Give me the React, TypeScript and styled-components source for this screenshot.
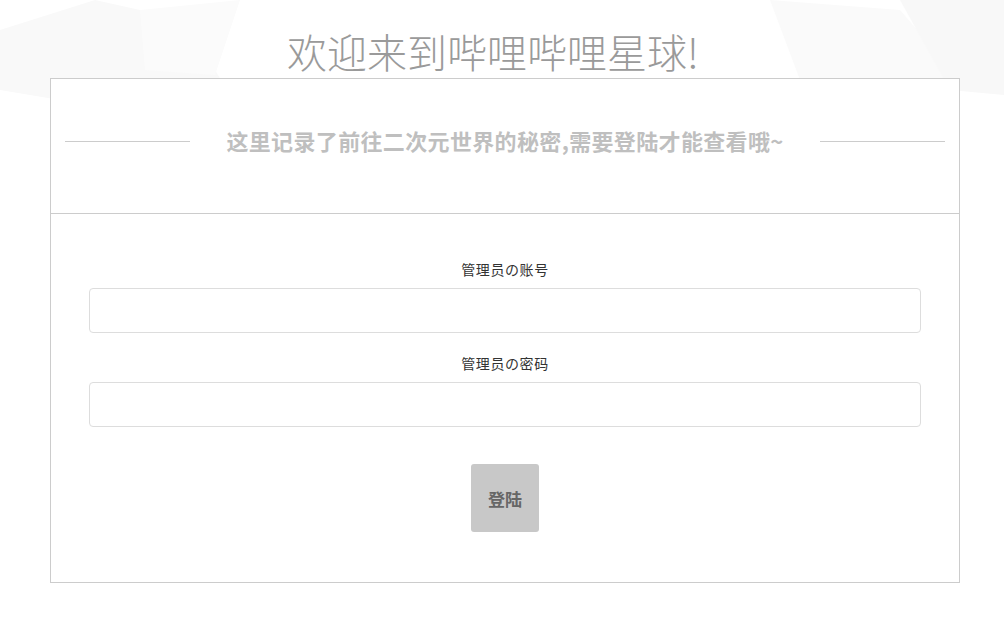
import React from "react";
import styled, { createGlobalStyle } from "styled-components";

const GlobalStyle = createGlobalStyle`
  html, body {
    margin: 0;
    padding: 0;
    background: #ffffff;
  }
  body {
    font-family: "Noto Sans CJK SC", "Noto Sans", "Liberation Sans", sans-serif;
    color: #333;
  }
  * {
    box-sizing: border-box;
  }
`;

const FIELDS = [
  { label: "管理员の账号", type: "text" },
  { label: "管理员の密码", type: "password" },
];

export default function App() {
  const [values, setValues] = React.useState<string[]>(["", ""]);

  return (
    <Page>
      <GlobalStyle />
      <Backdrop viewBox="0 0 1004 120" preserveAspectRatio="none" aria-hidden>
        <polygon points="0,30 95,0 185,20 230,95 150,110 60,100 0,90" fill="#f9f9f9" />
        <polygon points="140,10 240,0 215,75 145,70" fill="#fbfbfb" />
        <polygon points="770,0 900,10 960,80 870,95 800,80" fill="#fafafa" />
        <polygon points="900,0 1004,0 1004,95 950,90" fill="#f8f8f8" />
      </Backdrop>
      <Title>欢迎来到哔哩哔哩星球!</Title>
      <Panel>
        <PanelHead>
          <Rule />
          <Tagline>这里记录了前往二次元世界的秘密,需要登陆才能查看哦~</Tagline>
          <Rule />
        </PanelHead>
        <Form
          onSubmit={(e) => {
            e.preventDefault();
          }}
        >
          {FIELDS.map((field, idx) => (
            <Field key={field.label}>
              <Label>{field.label}</Label>
              <Input
                type={field.type}
                value={values[idx]}
                onChange={(e) => {
                  const next = [...values];
                  next[idx] = e.target.value;
                  setValues(next);
                }}
              />
            </Field>
          ))}
          <LoginButton type="submit">登陆</LoginButton>
        </Form>
      </Panel>
    </Page>
  );
}

const Page = styled.div`
  position: relative;
  width: 1004px;
  min-height: 623px;
  padding-top: 24px;
  overflow: hidden;
`;

const Backdrop = styled.svg`
  position: absolute;
  top: 0;
  left: 0;
  width: 1004px;
  height: 120px;
  z-index: 0;
`;

const Title = styled.h1`
  position: relative;
  z-index: 1;
  margin: 0 0 0 287px;
  height: 54px;
  font-size: 40px;
  line-height: 54px;
  font-weight: 300;
  color: #9a9a9a;
  letter-spacing: 0;
  white-space: nowrap;
`;

const Panel = styled.div`
  position: relative;
  z-index: 1;
  width: 910px;
  margin-left: 50px;
  background: #ffffff;
  border: 1px solid #cccccc;
`;

const PanelHead = styled.div`
  display: flex;
  align-items: center;
  height: 135px;
  padding: 0 14px 10px 14px;
  border-bottom: 1px solid #cccccc;
`;

const Rule = styled.div`
  flex: 1;
  height: 1px;
  background: #cccccc;
`;

const Tagline = styled.h2`
  margin: -2px 36px 0 36px;
  font-size: 22px;
  line-height: 30px;
  font-weight: 700;
  color: #bfbfbf;
  letter-spacing: 0.35px;
  white-space: nowrap;
`;

const Form = styled.form`
  display: flex;
  flex-direction: column;
  align-items: center;
  padding: 45px 38px 50px 38px;
`;

const Field = styled.div`
  display: flex;
  flex-direction: column;
  align-items: center;
  width: 100%;
  margin-bottom: 20px;
`;

const Label = styled.label`
  font-size: 14px;
  line-height: 20px;
  color: #333333;
  letter-spacing: 0.6px;
  margin-bottom: 9px;
`;

const Input = styled.input`
  width: 100%;
  height: 45px;
  border: 1px solid #dddddd;
  border-radius: 4px;
  padding: 0 12px;
  font-size: 14px;
  outline: none;
  background: #ffffff;
  &:focus {
    border-color: #bbbbbb;
  }
`;

const LoginButton = styled.button`
  margin-top: 17px;
  width: 68px;
  height: 68px;
  border: none;
  border-radius: 3px;
  background: #c8c8c8;
  color: #666666;
  font-family: inherit;
  font-size: 17px;
  font-weight: 700;
  cursor: pointer;
`;
